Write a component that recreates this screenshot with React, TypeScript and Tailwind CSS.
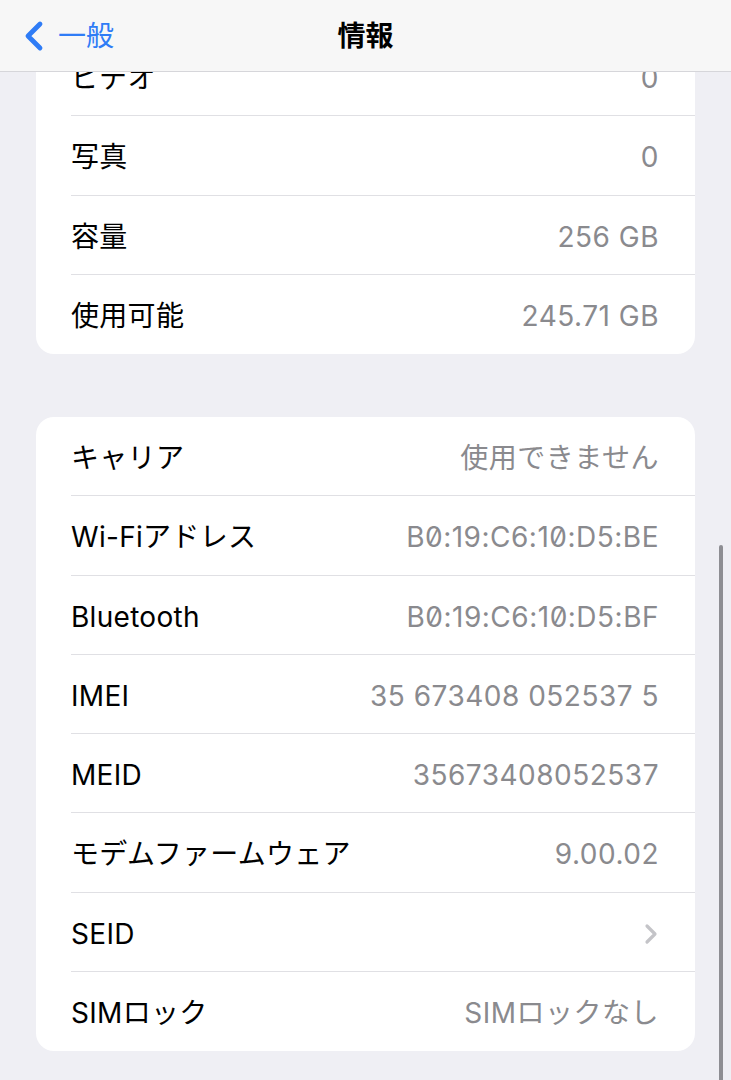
import { ChevronLeft, ChevronRight } from "lucide-react";

const storage = [
  { label: "ビデオ", value: "0" },
  { label: "写真", value: "0" },
  { label: "容量", value: "256 GB" },
  { label: "使用可能", value: "245.71 GB" },
];

const network = [
  { label: "キャリア", value: "使用できません" },
  { label: "Wi-Fiアドレス", value: "B0:19:C6:10:D5:BE", mac: true },
  { label: "Bluetooth", value: "B0:19:C6:10:D5:BF", mac: true },
  { label: "IMEI", value: "35 673408 052537 5" },
  { label: "MEID", value: "35673408052537" },
  { label: "モデムファームウェア", value: "9.00.02" },
  { label: "SEID", value: "", chevron: true },
  { label: "SIMロック", value: "SIMロックなし" },
];

function Row({ label, value, chevron, mac, last }) {
  return (
    <div className="flex h-[79.25px] pl-[35px]">
      <div
        className={
          "flex flex-1 items-center justify-between pr-[36px] pt-[4px] " +
          (last ? "" : "border-b border-[#e0e0e4]")
        }
      >
        <span className="text-[28px] tracking-[0.3px] text-black">{label}</span>
        {chevron ? (
          <ChevronRight className="mr-[-8px] h-[32px] w-[32px] text-[#c4c4c8]" strokeWidth={2.4} />
        ) : (
          <span
            className={
              "text-[28px] tracking-[0.5px] text-[#8a8a8e] " + (mac ? "slashed-zero" : "")
            }
          >
            {value}
          </span>
        )}
      </div>
    </div>
  );
}

function Card({ rows }) {
  return (
    <div className="mx-[36px] overflow-hidden rounded-[18px] bg-white">
      {rows.map((r, i) => (
        <Row key={r.label} {...r} last={i === rows.length - 1} />
      ))}
    </div>
  );
}

export default function App() {
  return (
    <div
      className="relative h-[1080px] w-[731px] overflow-hidden bg-[#efeff4]"
      style={{ fontFamily: 'Inter, "Noto Sans CJK JP", sans-serif' }}
    >
      <div className="flex flex-col gap-[63px] pt-[37px]">
        <Card rows={storage} />
        <Card rows={network} />
      </div>

      <div className="absolute left-0 right-0 top-0 flex h-[72px] items-center border-b border-[#d6d6da] bg-[#f7f7f7]">
        <div className="flex items-center pl-[10px] text-[#2f7cf6]">
          <ChevronLeft className="h-[48px] w-[48px]" strokeWidth={2.4} />
          <span className="text-[28px]">一般</span>
        </div>
        <span className="absolute left-1/2 -translate-x-1/2 text-[28px] font-bold text-black">情報</span>
      </div>

      <div className="absolute right-[8px] top-[545px] h-[540px] w-[4px] rounded-full bg-[#8e8e93]" />
    </div>
  );
}
